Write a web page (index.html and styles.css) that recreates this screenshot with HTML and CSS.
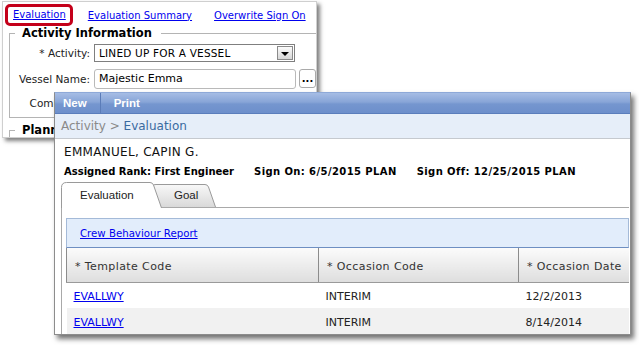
FILE: index.html
```html
<!DOCTYPE html>
<html lang="en">
<head>
    <meta charset="UTF-8">
    <title>Evaluation</title>
    <link rel="stylesheet" href="styles.css">
</head>
<body>
    <div class="desk">
        <section class="win back">
            <nav class="toplinks">
                <a class="current" href="#">Evaluation</a>
                <a class="summary" href="#">Evaluation Summary</a>
                <a href="#">Overwrite Sign On</a>
            </nav>
            <fieldset class="group first">
                <legend>Activity Information</legend>
                <div class="row r1">
                    <label>* Activity:</label>
                    <div class="select"><span>LINED UP FOR A VESSEL</span><i class="drop"></i></div>
                </div>
                <div class="row r2">
                    <label>Vessel Name:</label>
                    <div class="lookup">
                        <div class="input">Majestic Emma</div>
                        <button class="dots">...</button>
                    </div>
                </div>
                <div class="row r3">
                    <label>Comments:</label>
                </div>
            </fieldset>
            <fieldset class="group">
                <legend>Planning</legend>
            </fieldset>
        </section>

        <section class="win front">
            <div class="toolbar">
                <span class="btn sep">New</span>
                <span class="btn">Print</span>
            </div>
            <div class="crumb"><span class="muted">Activity &gt;</span> Evaluation</div>
            <div class="person">
                <div class="name">EMMANUEL, CAPIN G.</div>
                <div class="info">
                    <span>Assigned Rank: First Engineer</span>
                    <span class="date">Sign On: 6/5/2015 PLAN</span>
                    <span class="date">Sign Off: 12/25/2015 PLAN</span>
                </div>
            </div>
            <div class="tabs">
                <div class="tab active">
                    <svg width="101" height="26" viewBox="0 0 101 26">
                        <path d="M0.5 26 V5.5 Q0.5 0.5 5.5 0.5 H89 Q91.5 0.5 92.5 3 L100.5 26 Z" fill="#fff"/>
                        <path d="M0.5 26 V5.5 Q0.5 0.5 5.5 0.5 H89 Q91.5 0.5 92.5 3 L100.5 26" fill="none" stroke="#9a9a9a"/>
                    </svg>
                    Evaluation
                </div>
                <div class="tab">
                    <svg width="66" height="26" viewBox="0 0 66 26">
                        <defs>
                            <linearGradient id="goalbg" x1="0" y1="0" x2="0" y2="1">
                                <stop offset="0" stop-color="#f8f8f8"/>
                                <stop offset="1" stop-color="#d9d9d9"/>
                            </linearGradient>
                        </defs>
                        <path d="M0.5 25 V7 Q0.5 2.5 5 2.5 H54 Q56.5 2.5 57.5 5 L64.5 25" fill="url(#goalbg)" stroke="#9a9a9a"/>
                    </svg>
                    Goal
                </div>
            </div>
            <div class="panel">
                <div class="reportbar"><a href="#">Crew Behaviour Report</a></div>
                <table class="grid">
                    <thead>
                        <tr>
                            <th class="c1">* Template Code</th>
                            <th class="c2">* Occasion Code</th>
                            <th>* Occasion Date</th>
                        </tr>
                    </thead>
                    <tbody>
                        <tr>
                            <td><a href="#">EVALLWY</a></td>
                            <td>INTERIM</td>
                            <td>12/2/2013</td>
                        </tr>
                        <tr class="alt">
                            <td><a href="#">EVALLWY</a></td>
                            <td>INTERIM</td>
                            <td>8/14/2014</td>
                        </tr>
                    </tbody>
                </table>
            </div>
        </section>
    </div>
</body>
</html>
```

FILE: styles.css
```css
* {
    box-sizing: border-box;
    margin: 0;
    padding: 0;
}
body {
    font-family: "DejaVu Sans", Verdana, sans-serif;
    background: #fff;
    color: #000;
}
a {
    color: #0000ee;
    text-decoration: underline;
}
.desk {
    position: relative;
    width: 639px;
    height: 345px;
    overflow: hidden;
}
.win {
    position: absolute;
    background: #fff;
    overflow: hidden;
}

/* back window */
.back {
    left: 2px;
    top: 1px;
    width: 315px;
    height: 137px;
    border: 1px solid #cfcfcf;
    padding: 2px 0 0 2px;
    box-shadow: 3px 3px 4px rgba(0, 0, 0, 0.5);
}
.toplinks {
    display: flex;
    align-items: center;
    height: 22px;
    font-size: 10px;
}
.toplinks .current {
    height: 22px;
    line-height: 16px;
    padding: 0 4px 0 5px;
    border: 3px solid #c4001a;
    border-radius: 5px;
    margin-right: 15px;
}
.toplinks .summary {
    margin-right: 22px;
}
.group {
    margin-left: 4px;
    border: 1px solid #b4b4b4;
    padding: 0;
}
.group.first {
    height: 92px;
}
.group + .group {
    margin-top: 5px;
}
.group legend {
    font-size: 11.5px;
    font-weight: bold;
    line-height: 14px;
    margin-left: 5px;
    padding: 0 9px 0 7px;
}
.row {
    display: flex;
    align-items: center;
    gap: 4px;
}
.row label {
    width: 80px;
    text-align: right;
    font-size: 10.5px;
    color: #222;
}
.r1 {
    margin-top: 4px;
    height: 18px;
}
.r2 {
    margin-top: 7px;
    height: 20px;
}
.r3 {
    margin-top: 7px;
    height: 14px;
}
.select {
    width: 201px;
    height: 18px;
    border: 1px solid #7f7f7f;
    display: flex;
    align-items: center;
    justify-content: space-between;
    padding-left: 4px;
    font-size: 10.5px;
    letter-spacing: 0.2px;
}
.drop {
    width: 16px;
    height: 14px;
    margin-right: 1px;
    border: 1px solid #8a8a8a;
    background: linear-gradient(#fbfbfb, #d6d6d6);
    display: flex;
    align-items: center;
    justify-content: center;
}
.drop::after {
    content: "";
    border-left: 4px solid transparent;
    border-right: 4px solid transparent;
    border-top: 4px solid #000;
    margin-top: 1px;
}
.lookup {
    display: flex;
    gap: 3px;
}
.input {
    width: 202px;
    height: 20px;
    border: 1px solid #b9b9b9;
    border-radius: 3px;
    padding-left: 4px;
    font-size: 11px;
    line-height: 18px;
}
.dots {
    width: 17px;
    height: 19px;
    border: 1px solid #aaa;
    border-radius: 3px;
    background: #fff;
    font-family: "DejaVu Sans", sans-serif;
    font-size: 10px;
    font-weight: bold;
    line-height: 12px;
}

/* front window */
.front {
    left: 54px;
    top: 92px;
    width: 577px;
    height: 243px;
    border: 1px solid #8c8c8c;
    border-top-color: #8ea9d8;
    box-shadow: 3px 4px 5px rgba(0, 0, 0, 0.55);
}
.toolbar {
    height: 21px;
    display: flex;
    align-items: stretch;
    background: linear-gradient(#a6bde5, #88a5d7 45%, #7596cf 55%, #6d8fcb);
    border-bottom: 1px solid #5a7dbc;
    font-family: "Liberation Sans", Arial, sans-serif;
    font-size: 11.5px;
    font-weight: bold;
    color: #fff;
}
.btn {
    display: flex;
    align-items: center;
    padding: 0 12px 0 13px;
}
.btn.sep {
    padding-left: 8px;
    padding-right: 13px;
    border-right: 1px solid #5b7cb8;
}
.crumb {
    height: 25px;
    background: #e6eef9;
    border-bottom: 1px solid #c5c9cf;
    padding-left: 6px;
    font-size: 12px;
    line-height: 24px;
    color: #3a6aa0;
}
.muted {
    color: #8a8a8a;
}
.person {
    padding: 5px 0 0 9px;
}
.name {
    font-size: 12px;
    line-height: 16px;
    letter-spacing: 0.3px;
    color: #111;
}
.info {
    display: flex;
    gap: 20px;
    margin-top: 5px;
    font-size: 10px;
    font-weight: bold;
    line-height: 14px;
}
.info .date {
    letter-spacing: 0.4px;
}
.tabs {
    display: flex;
    height: 26px;
    margin: 3px 0 -1px 6px;
    position: relative;
    z-index: 1;
}
.tab {
    position: relative;
    z-index: 1;
    width: 66px;
    height: 26px;
    margin-left: -11px;
    padding-left: 23px;
    font-family: "Liberation Sans", Arial, sans-serif;
    font-size: 11.5px;
    line-height: 26px;
    color: #222;
}
.tab.active {
    z-index: 2;
    width: 101px;
    margin-left: 0;
    padding-left: 19px;
}
.tab svg {
    position: absolute;
    left: 0;
    top: 0;
    z-index: -1;
}
.panel {
    margin: 0 1px 0 6px;
    border-left: 1px solid #a9a9a9;
    border-top: 1px solid #a9a9a9;
    padding: 10px 0 0 4px;
}
.reportbar {
    height: 30px;
    display: flex;
    align-items: center;
    padding-left: 13px;
    background: #e2edfb;
    border: 1px solid #a4bad8;
    border-bottom-color: #6e8fc2;
    font-size: 10.2px;
}
.grid {
    width: 100%;
    border-collapse: collapse;
    font-size: 11px;
}
.grid th {
    height: 34px;
    padding: 3px 0 0 8px;
    text-align: left;
    font-weight: normal;
    color: #333;
    letter-spacing: 0.4px;
    background: linear-gradient(#fbfbfb, #dedede);
    border-left: 1px solid #8c8c8c;
    border-bottom: 1px solid #9a9a9a;
}
.grid .c1 {
    width: 252px;
}
.grid .c2 {
    width: 200px;
}
.grid td {
    height: 26px;
    padding: 2px 0 0 7px;
    color: #222;
}
.grid .alt td {
    background: #f1f1f1;
}
```
